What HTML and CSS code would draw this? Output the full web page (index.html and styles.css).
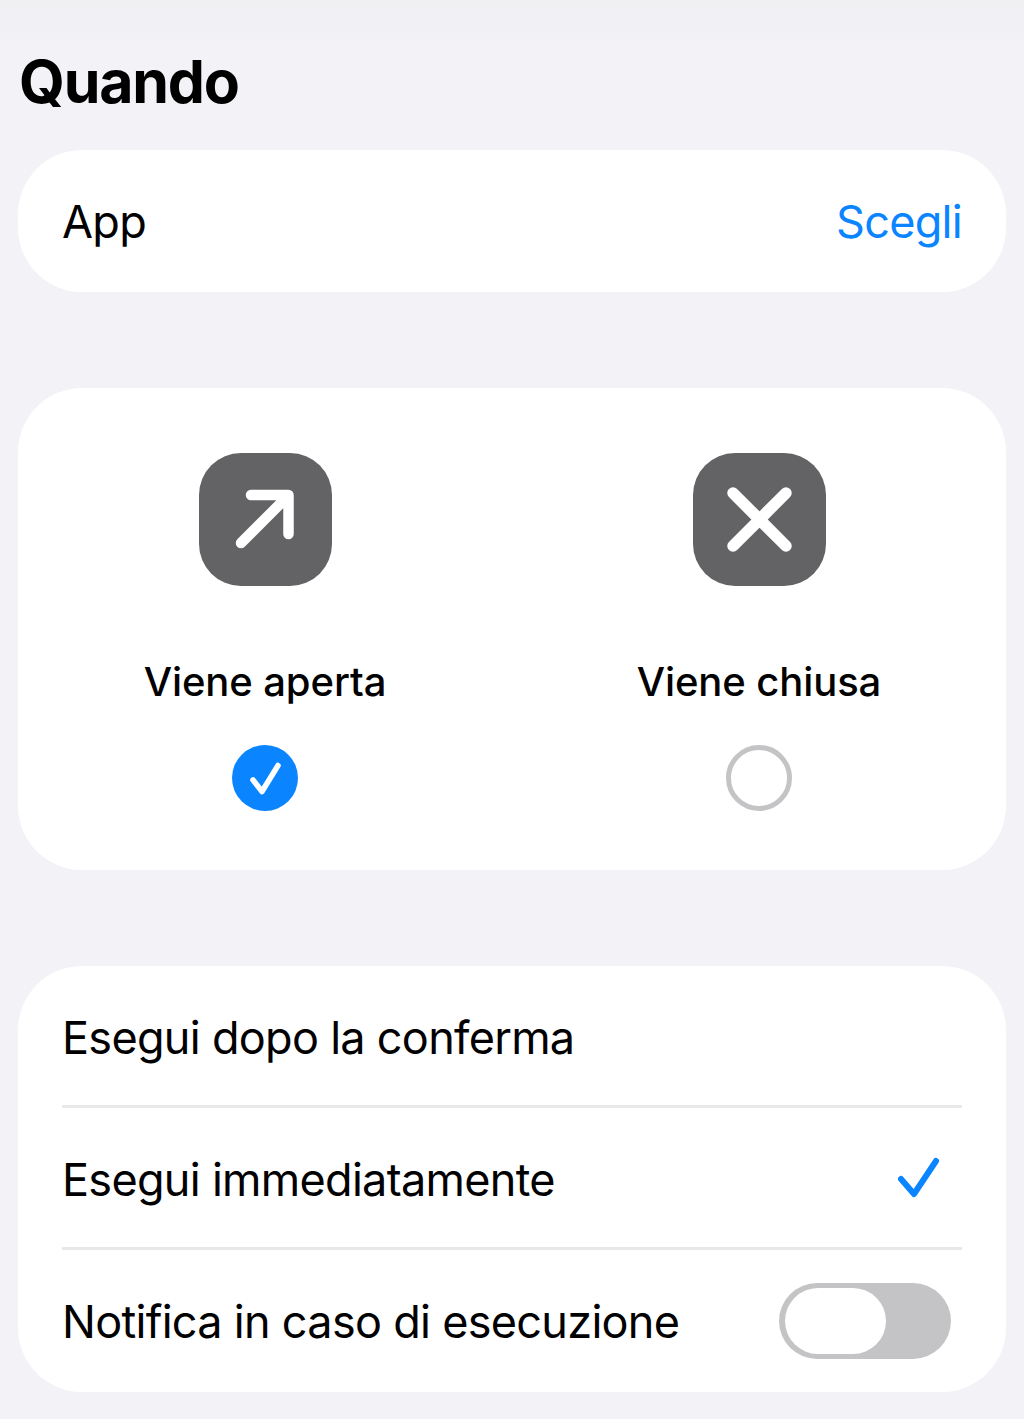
FILE: index.html
```html
<!doctype html>
<html lang="it">
	<head>
		<meta charset="utf-8">
		<title>Quando</title>
		<link rel="stylesheet" href="styles.css">
	</head>
	<body>
		<h1 class="title">Quando</h1>

		<section class="card card-app">
			<div class="row">
				<span>App</span>
				<span class="link">Scegli</span>
			</div>
		</section>

		<section class="card card-choice">
			<div class="choice">
				<div class="choice-icon">
					<svg viewBox="0 0 133 133" width="133" height="133">
						<path d="M42 90L88 44M52 42H89.500V81" fill="none" stroke="#fff" stroke-width="10.500" stroke-linecap="round" stroke-linejoin="round"/>
					</svg>
				</div>
				<div class="choice-label">Viene aperta</div>
				<div class="radio radio-on">
					<svg viewBox="0 0 66 66" width="66" height="66">
						<path d="M21 35L30 46.500L46 20.500" fill="none" stroke="#fff" stroke-width="5.500" stroke-linecap="round" stroke-linejoin="round"/>
					</svg>
				</div>
			</div>
			<div class="choice">
				<div class="choice-icon">
					<svg viewBox="0 0 133 133" width="133" height="133">
						<path d="M40 40L93 93M93 40L40 93" fill="none" stroke="#fff" stroke-width="11.500" stroke-linecap="round"/>
					</svg>
				</div>
				<div class="choice-label">Viene chiusa</div>
				<div class="radio"></div>
			</div>
		</section>

		<section class="card card-options">
			<div class="row">
				<span>Esegui dopo la conferma</span>
			</div>
			<div class="row">
				<span>Esegui immediatamente</span>
				<svg class="tick" viewBox="0 0 44 44" width="44" height="44">
					<path d="M5 22L18 37L40 4" fill="none" stroke="#0a84ff" stroke-width="6" stroke-linecap="round" stroke-linejoin="round"/>
				</svg>
			</div>
			<div class="row">
				<span>Notifica in caso di esecuzione</span>
				<div class="toggle"><div class="toggle-thumb"></div></div>
			</div>
		</section>
	</body>
</html>
```

FILE: styles.css
```css
* {
	box-sizing: border-box;
	font-family: Inter, "Liberation Sans", sans-serif;
}

html {
	background: #f2f2f7;
}

body {
	background: linear-gradient(#f0f0f3, #f2f2f7) no-repeat top / 100% 50px;
	color: #000;
	margin: 0;
}

.title {
	font-size: 59px;
	font-weight: 700;
	height: 150px;
	letter-spacing: -1.2px;
	line-height: 70px;
	margin: 0;
	padding: 47px 0 0 19px;
}

.card {
	background: #fff;
	border-radius: 64px;
	margin: 0 18px 96px;
}

.card-app {
	height: 142px;
}

.row {
	align-items: center;
	display: flex;
	font-size: 45px;
	height: 142px;
	justify-content: space-between;
	letter-spacing: -0.7px;
	margin: 0 44px;
}

.card-options .row:not(:last-child) {
	border-bottom: 3px solid #e8e8eb;
	padding-top: 3px;
}

.link {
	color: #0a84ff;
}

.card-choice {
	display: grid;
	grid-template-columns: 1fr 1fr;
	height: 482px;
	padding-top: 65px;
}

.choice {
	align-items: center;
	display: flex;
	flex-direction: column;
}

.choice-icon {
	background: #636366;
	border-radius: 42px;
	height: 133px;
	width: 133px;
}

.choice-icon svg,
.radio svg {
	display: block;
}

.choice-label {
	font-size: 40px;
	font-weight: 500;
	letter-spacing: -0.1px;
	line-height: 50px;
	margin-top: 71px;
}

.radio {
	border: 5px solid #c4c4c6;
	border-radius: 50%;
	height: 66px;
	margin-top: 38px;
	width: 66px;
}

.radio-on {
	background: #0a84ff;
	border: 0;
}

.card-options {
	height: 426px;
	margin-bottom: 0;
}

.tick {
	margin-right: 22px;
}

.toggle {
	background: #c4c4c6;
	border-radius: 38px;
	height: 76px;
	margin-right: 11px;
	padding: 5px 6px;
	width: 172px;
}

.toggle-thumb {
	background: #fff;
	border-radius: 33px;
	height: 66px;
	width: 101px;
}
```
